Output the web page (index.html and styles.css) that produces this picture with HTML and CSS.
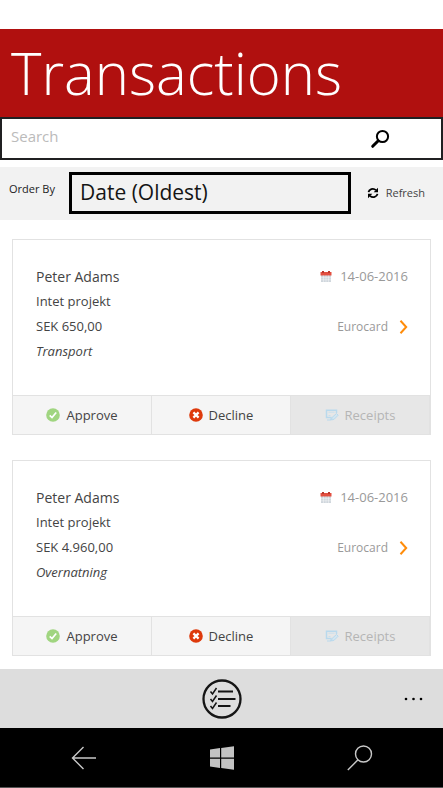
FILE: index.html
```html
<!DOCTYPE html>
<html lang="en">
<head>
<meta charset="utf-8">
<meta name="viewport" content="width=device-width, initial-scale=1">
<title>Transactions</title>
<link rel="stylesheet" href="styles.css">
</head>
<body>
<svg class="symbols" aria-hidden="true">
  <symbol id="calendar" viewBox="0 0 12 12">
    <path fill="#cfd6dc" d="M1 4h10v7H1z"/>
    <path fill="#e34f40" d="M.5 1h11v3.500H.5z"/>
    <path fill="#b8382e" d="M2 0h2v2H2zM8 0h2v2H8z"/>
    <path stroke="#fff" stroke-width=".4" d="M1 6.700h10M1 8.800h10M3.500 4.500v6.500M6 4.500v6.500M8.500 4.500v6.500"/>
  </symbol>
  <symbol id="approve" viewBox="0 0 14 14">
    <circle cx="7" cy="7" r="6.800" fill="#a0d580"/>
    <path fill="none" stroke="#fff" stroke-width="1.700" d="M3.700 7.300 6 9.500l4.200-5"/>
  </symbol>
  <symbol id="decline" viewBox="0 0 14 14">
    <circle cx="7" cy="7" r="6.800" fill="#de3a0c"/>
    <path stroke="#fff" stroke-width="2.200" d="m4.400 4.400 5.200 5.200m0-5.200L4.400 9.600"/>
  </symbol>
  <symbol id="receipt" viewBox="0 0 14 12">
    <path fill="none" stroke="#b9d9ed" stroke-width="1.500" d="M6.500 8.500H1.500V1.200h10V4"/>
    <path fill="none" stroke="#c8dfed" d="M3.500 3.200h6M3.500 6.500H5.500"/>
    <path fill="none" stroke="#b9d9ed" stroke-width="1.200" d="M2 11h3.500l1-2.500"/>
    <path fill="#d3e6f1" stroke="#b9d9ed" d="m6.500 11 .6-2.600 4.400-3.900 1.700 1.700-4 4z"/>
  </symbol>
  <symbol id="chevron" viewBox="0 0 9 14">
    <path fill="none" stroke="#ff8c0a" stroke-width="2" d="m1.500 .8 5.700 6.200-5.700 6.200"/>
  </symbol>
</svg>
<header>
  <h1>Transactions</h1>
</header>
<main>
  <form class="search" role="search">
    <input type="search" placeholder="Search" aria-label="Search">
    <button type="button" aria-label="Search">
      <svg width="20" height="20" viewBox="0 0 20 20"><circle cx="12.500" cy="7.500" r="5.600" fill="none" stroke="#000" stroke-width="2"/><path stroke="#000" stroke-width="3" stroke-linecap="round" d="m8 12-5.300 5.300"/></svg>
    </button>
  </form>
  <div class="toolbar">
    <label for="order">Order By</label>
    <select id="order"><option>Date (Oldest)</option></select>
    <button type="button" class="refresh">
      <svg width="12" height="12" viewBox="0 0 12 12"><path fill="none" stroke="#000" stroke-width="1.800" d="M1.500 5.200C2 2.500 6 .5 9 3.200M10.500 6.800C10 9.500 6 11.500 3 8.800"/><path d="M11 .7v4.500H6.700zM1 11.300V6.800h4.300z"/></svg>
      Refresh
    </button>
  </div>
  <article class="card">
    <div class="details">
      <div class="row"><h2>Peter Adams</h2><span class="date"><svg width="12" height="12"><use href="#calendar"/></svg><time datetime="2016-06-14">14-06-2016</time></span></div>
      <p>Intet projekt</p>
      <div class="row"><p>SEK 650,00</p><a class="source" href="#">Eurocard<svg width="9" height="14"><use href="#chevron"/></svg></a></div>
      <p class="category">Transport</p>
    </div>
    <div class="actions">
      <button type="button"><svg width="14" height="14"><use href="#approve"/></svg>Approve</button>
      <button type="button"><svg width="14" height="14"><use href="#decline"/></svg>Decline</button>
      <button type="button" disabled><svg width="14" height="12"><use href="#receipt"/></svg>Receipts</button>
    </div>
  </article>
  <article class="card">
    <div class="details">
      <div class="row"><h2>Peter Adams</h2><span class="date"><svg width="12" height="12"><use href="#calendar"/></svg><time datetime="2016-06-14">14-06-2016</time></span></div>
      <p>Intet projekt</p>
      <div class="row"><p>SEK 4.960,00</p><a class="source" href="#">Eurocard<svg width="9" height="14"><use href="#chevron"/></svg></a></div>
      <p class="category">Overnatning</p>
    </div>
    <div class="actions">
      <button type="button"><svg width="14" height="14"><use href="#approve"/></svg>Approve</button>
      <button type="button"><svg width="14" height="14"><use href="#decline"/></svg>Decline</button>
      <button type="button" disabled><svg width="14" height="12"><use href="#receipt"/></svg>Receipts</button>
    </div>
  </article>
</main>
<footer>
  <div class="appbar">
    <button type="button" class="list" aria-label="Select items">
      <svg width="40" height="40" viewBox="0 0 40 40" fill="none" stroke="#151515"><circle cx="20" cy="20" r="18.500" stroke-width="2.300"/><path stroke-width="1.900" d="M16 12.500h15M16 20h17.500M16 27h12.500"/><path stroke-width="1.500" d="m8.500 12.500 2 2.500 4-6M8.500 20l2 2.500 4-6M8.500 27l2 2.500 4-6"/></svg>
    </button>
    <button type="button" class="more" aria-label="More">
      <svg width="20" height="4" viewBox="0 0 20 4"><circle cx="2" cy="2" r="1.300"/><circle cx="9.500" cy="2" r="1.300"/><circle cx="17" cy="2" r="1.300"/></svg>
    </button>
  </div>
  <nav class="system" aria-label="System">
    <button type="button" aria-label="Back"><svg width="26" height="24" viewBox="0 0 26 24" fill="none" stroke="#c8c8c8" stroke-width="1.400"><path d="M13.500 1 2.500 12l11 11M2.500 12H26"/></svg></button>
    <button type="button" aria-label="Start"><svg width="24" height="24" viewBox="0 0 24 24" fill="#c3c3c3"><path d="m0 3.500 10-1.400v9.400H0zM11.200 1.900 24 .2v11.300H11.200zM0 12.700h10v9.200L0 20.500zM11.200 12.700H24v11.100l-12.800-1.700z"/></svg></button>
    <button type="button" aria-label="Search"><svg width="26" height="26" viewBox="0 0 26 26" fill="none" stroke="#c8c8c8" stroke-width="1.400"><circle cx="16.500" cy="9" r="8"/><path d="M11 14.800.8 25"/></svg></button>
  </nav>
</footer>
</body>
</html>
```
FILE: styles.css
```css
* { box-sizing: border-box; }
body {
  margin: 0;
  padding-top: 29px;
  min-height: 100vh;
  display: flex;
  flex-direction: column;
  background: #fff;
  color: #444;
  font: 13px/20px "Open Sans", "Noto Sans", sans-serif;
}
.symbols { display: none; }
svg { display: block; flex: none; }
h1, h2, p { margin: 0; font-weight: 400; }
button, input, select { margin: 0; border: 0; border-radius: 0; background: none; color: inherit; font: inherit; }
button { padding: 0; display: flex; align-items: center; justify-content: center; }
header { background: #b0100f; padding: 0 11px; }
h1 { color: #fff; font-size: 58px; font-weight: 300; line-height: 88px; }
main { flex: 1; }
.search { display: flex; height: 43px; border: 2px solid #202022; }
.search input { flex: 1; min-width: 0; padding: 0 9px 6px; font-size: 15px; appearance: none; outline: 0; }
.search input::placeholder { color: #bbb; opacity: 1; }
.search button { width: 40px; margin-right: 41px; }
.toolbar { display: flex; align-items: center; margin-top: 7px; padding: 5px 18px 6px 9px; background: #f2f2f2; font-size: 11px; }
.toolbar label { width: 60px; padding-bottom: 8px; color: #222; }
.toolbar select { flex: 1; min-width: 0; height: 42px; padding: 0 8px 2px; border: 3px solid #000; color: #151515; font-size: 21px; line-height: 32px; appearance: none; }
.refresh { gap: 7px; margin-left: 16px; }
.card { margin: 19px 12px 25px; border: 1px solid #e2e2e2; }
.card + .card { margin-top: 0; margin-bottom: 12px; }
.details { height: 155px; padding: 24px 22px 0 23px; line-height: 25px; }
.row { display: flex; justify-content: space-between; }
h2 { font-size: 14px; }
.date, .source { display: flex; align-items: center; color: #999; text-decoration: none; }
.date { gap: 8px; }
.source { gap: 11px; font-size: 12px; }
.category { font-style: italic; }
.actions { display: grid; grid-template-columns: repeat(3, 1fr); border-top: 1px solid #e2e2e2; background: #f5f5f5; }
.actions button { height: 38px; gap: 6px; border-right: 1px solid #e2e2e2; }
.actions button:disabled { background: #e7e7e7; color: #b5b5b5; }
.appbar { display: grid; grid-template-columns: 1fr auto 1fr; align-items: center; height: 59px; padding: 0 19px; background: #ddd; }
.list { grid-column: 2; }
.more { justify-self: end; }
.system { display: flex; justify-content: space-between; height: 60px; padding: 0 70px; border-bottom: 1px solid #555; background: #000; }
```
